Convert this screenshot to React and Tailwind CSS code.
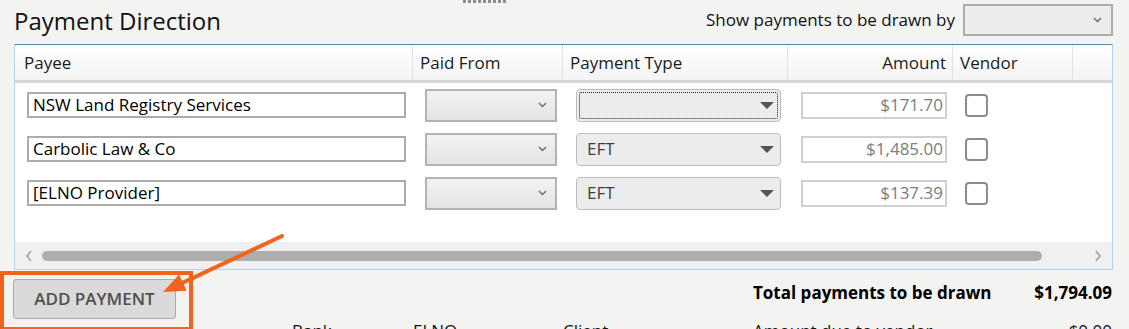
import React from "react";

const rows = [
  { payee: "NSW Land Registry Services", type: "", amount: "$171.70", focus: true },
  { payee: "Carbolic Law & Co", type: "EFT", amount: "$1,485.00" },
  { payee: "[ELNO Provider]", type: "EFT", amount: "$137.39" },
];

const Chevron = () => (
  <svg width="9" height="6" viewBox="0 0 9 6" className="shrink-0">
    <path d="M1 1 L4.5 4.5 L8 1" fill="none" stroke="#6b6b6b" strokeWidth="1.4" />
  </svg>
);

const Caret = () => (
  <svg width="14" height="7" viewBox="0 0 14 7" className="shrink-0">
    <path d="M0 0 H14 L7 7 Z" fill="#555" />
  </svg>
);

function Row({ row }) {
  return (
    <div className="grid grid-cols-[397px_150px_225px_165px_120px_1fr] h-[44px] items-center">
      <div className="pl-[12px] pr-[6px]">
        <div className="h-[26px] border-2 border-[#ababab] bg-white flex items-center px-[4px] text-[17px] text-black">
          {row.payee}
        </div>
      </div>
      <div className="pl-[13px] pr-[5px]">
        <div className="h-[33px] border-2 border-[#b3b3b3] bg-gradient-to-b from-[#f2f2f2] to-[#e4e4e4] flex items-center justify-end pr-[8px]">
          <Chevron />
        </div>
      </div>
      <div className="pl-[14px] pr-[6px]">
        <div className="h-[33px] rounded-[4px] border border-[#bcbcbc] bg-[#ececec] p-[2px]">
          <div
            className={`h-full rounded-[2px] flex items-center justify-between pl-[7px] pr-[3px] text-[17px] text-[#3f3f3f] ${
              row.focus ? "border border-dotted border-[#222]" : "border border-transparent"
            }`}
          >
            <span>{row.type}</span>
            <Caret />
          </div>
        </div>
      </div>
      <div className="pl-[14px] pr-[5px]">
        <div className="h-[27px] border-2 border-[#d0d0d4] bg-white flex items-center justify-end px-[2px] text-[17px] text-[#7d7d7d]">
          {row.amount}
        </div>
      </div>
      <div className="pl-[13px]">
        <div className="w-[23px] h-[23px] rounded-[4px] border-2 border-[#8c8c8c] bg-white" />
      </div>
      <div />
    </div>
  );
}

export default function App() {
  return (
    <div
      className="relative w-[1129px] h-[329px] overflow-hidden bg-[#f3f3f2] text-[#111]"
      style={{ fontFamily: '"Open Sans", "Noto Sans", sans-serif' }}
    >
      <div className="absolute top-0 left-[463px] w-[44px] h-[3px] bg-[repeating-linear-gradient(90deg,#8d8d8d_0_3px,transparent_3px_5px)]" />

      <div className="h-[44px] flex items-start justify-between pl-[14px] pr-[16px]">
        <h1 className="text-[24px] leading-[42px] text-[#111]">Payment Direction</h1>
        <div className="flex items-center gap-[8px] pt-[4px]">
          <span className="text-[17px] leading-[32px] text-[#111]">Show payments to be drawn by</span>
          <div className="w-[150px] h-[32px] border-2 border-[#adadad] bg-[#ececec] flex items-center justify-end pr-[9px]">
            <Chevron />
          </div>
        </div>
      </div>

      <div className="ml-[14px] w-[1099px] h-[226px] border border-[#b4d0ea] border-t-[#5f86b0] bg-white flex flex-col">
        <div className="grid grid-cols-[397px_150px_225px_165px_120px_1fr] h-[38px] bg-gradient-to-b from-white to-[#f4f4f4] border-b-[3px] border-[#d6d6d6] text-[17px] text-[#1b1b1b]">
          <div className="flex items-center pl-[9px]">Payee</div>
          <div className="flex items-center pl-[7px] border-l border-[#e2e2e2]">Paid From</div>
          <div className="flex items-center pl-[7px] border-l border-[#e2e2e2]">Payment Type</div>
          <div className="flex items-center justify-end pr-[6px] border-l border-[#e2e2e2]">Amount</div>
          <div className="flex items-center pl-[7px] border-l border-[#e2e2e2]">Vendor</div>
          <div className="border-l border-[#e2e2e2]" />
        </div>
        <div className="flex-1">
          {rows.map((r, i) => (
            <Row key={i} row={r} />
          ))}
        </div>
        <div className="h-[27px] bg-[#f0f0f0] flex items-center px-[10px]">
          <svg width="8" height="12" viewBox="0 0 8 12" className="shrink-0">
            <path d="M6 1 L2 6 L6 11" fill="none" stroke="#a0a0a0" strokeWidth="1.5" />
          </svg>
          <div className="ml-[9px] w-[1000px] h-[10px] rounded-full bg-[#adadad]" />
          <div className="flex-1" />
          <svg width="8" height="12" viewBox="0 0 8 12" className="shrink-0">
            <path d="M2 1 L6 6 L2 11" fill="none" stroke="#a0a0a0" strokeWidth="1.5" />
          </svg>
        </div>
      </div>

      <div className="flex items-start pl-[13px] pr-[17px] pt-[9px]">
        <button className="w-[163px] h-[40px] rounded-[3px] border border-[#a9a9a9] bg-[#dadada] text-[17px] font-semibold text-[#4f4f4f]">
          ADD PAYMENT
        </button>
        <div className="ml-auto w-[359px] flex justify-between pt-[1px] text-[17px] font-bold text-black">
          <span>Total payments to be drawn</span>
          <span>$1,794.09</span>
        </div>
      </div>
      <div className="flex text-[17px] text-[#111] pr-[17px] leading-[22px] pt-[1px]">
        <span className="ml-[292px] w-[121px]">Bank</span>
        <span className="w-[150px]">ELNO</span>
        <span>Client</span>
        <span className="ml-auto w-[359px] flex justify-between">
          <span>Amount due to vendor</span>
          <span>$0.00</span>
        </span>
      </div>

      <div className="absolute left-0 top-[271px] w-[193px] h-[60px] border-4 border-[#f0641e] pointer-events-none" />
      <svg className="absolute inset-0 pointer-events-none" width="1129" height="329">
        <line x1="282" y1="236" x2="183" y2="282.6" stroke="#f0641e" strokeWidth="4" strokeLinecap="round" />
        <polygon points="163,292 186.7,290.7 179.1,274.5" fill="#f0641e" />
      </svg>
    </div>
  );
}
